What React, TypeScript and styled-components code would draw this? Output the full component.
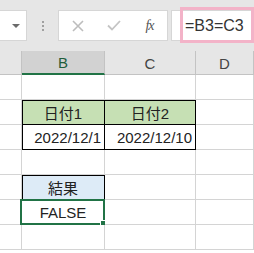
import React from "react";
import styled, { createGlobalStyle, css } from "styled-components";

const GlobalStyle = createGlobalStyle`
  html, body {
    margin: 0;
    padding: 0;
    background: #ffffff;
    font-family: "Liberation Sans", "Noto Sans CJK JP", sans-serif;
    overflow: hidden;
  }
`;

const GREEN = "#217346";

const Sheet = styled.div`
  width: 254px;
  height: 253px;
  overflow: hidden;
  background: #ffffff;
`;

const Toolbar = styled.div`
  height: 51px;
  box-sizing: border-box;
  padding-top: 10px;
  background: #e6e6e6;
  display: flex;
  align-items: flex-start;
`;

const NameBox = styled.div`
  width: 27px;
  height: 31px;
  box-sizing: border-box;
  background: #ffffff;
  border: 1px solid #d6d6d6;
  border-left: none;
  display: flex;
  align-items: center;
  justify-content: flex-end;
  padding-right: 6px;
`;

const Caret = styled.div`
  width: 0;
  height: 0;
  border-left: 4px solid transparent;
  border-right: 4px solid transparent;
  border-top: 4px solid #6b6b6b;
`;

const Grip = styled.div`
  width: 31px;
  height: 31px;
  display: flex;
  flex-direction: column;
  align-items: center;
  justify-content: center;
  gap: 2px;
`;

const Dot = styled.span`
  width: 2px;
  height: 2px;
  background: #a0a0a0;
`;

const ButtonBox = styled.div`
  width: 110px;
  height: 31px;
  box-sizing: border-box;
  background: #ffffff;
  border: 1px solid #d6d6d6;
  display: grid;
  grid-template-columns: 37px 36px 1fr;
  align-items: center;
  justify-items: center;
`;

const FxLabel = styled.span`
  font-family: "Liberation Serif", serif;
  font-style: italic;
  font-size: 14px;
  color: #555555;
  letter-spacing: -1px;
`;

const FormulaBox = styled.div`
  position: relative;
  flex: 1;
  margin-left: 3px;
  height: 31px;
  box-sizing: border-box;
  background: #ffffff;
  border: 1px solid #d6d6d6;
  border-right: none;
  display: flex;
  align-items: center;
  padding-left: 13px;
  font-size: 16px;
  color: #333333;
`;

const Highlight = styled.div`
  position: absolute;
  left: 8px;
  top: -4px;
  width: 74px;
  height: 36px;
  box-sizing: border-box;
  border: 3px solid #f3b3c8;
`;

const Grid = styled.div`
  display: grid;
  grid-template-columns: 22px 83px 91px 1fr;
  grid-auto-rows: 25px;
  grid-template-rows: 24px;
`;

const Head = styled.div<{ $selected?: boolean }>`
  box-sizing: border-box;
  background: ${(p) => (p.$selected ? "#d2d2d2" : "#e6e6e6")};
  border-right: 1px solid #c3c3c3;
  border-bottom: ${(p) => (p.$selected ? `2px solid ${GREEN}` : "1px solid #c3c3c3")};
  display: flex;
  align-items: center;
  justify-content: center;
  font-size: 15px;
  color: ${(p) => (p.$selected ? "#1f5e3c" : "#444444")};
  padding-top: 1px;
`;

type Fill = "green" | "blue" | undefined;

const Cell = styled.div<{
  $fill?: Fill;
  $box?: boolean;
  $top?: boolean;
  $left?: boolean;
  $align?: "center" | "right";
}>`
  position: relative;
  box-sizing: border-box;
  border-right: 1px solid #d4d4d4;
  border-bottom: 1px solid #d4d4d4;
  background: ${(p) =>
    p.$fill === "green" ? "#c6e0b4" : p.$fill === "blue" ? "#ddebf7" : "#ffffff"};
  display: flex;
  align-items: center;
  justify-content: ${(p) => (p.$align === "right" ? "flex-end" : "center")};
  padding: 0 3px;
  font-size: 15px;
  color: #222222;
  white-space: nowrap;
  ${(p) =>
    p.$box &&
    css`
      border-right-color: #000000;
      border-bottom-color: #000000;
    `}
  box-shadow: ${(p) =>
    [p.$left ? "inset 1px 0 #000" : "", p.$top ? "inset 0 1px #000" : ""]
      .filter(Boolean)
      .join(", ") || "none"};
`;

const Selection = styled.div`
  position: absolute;
  left: -2px;
  top: -1px;
  right: -1px;
  bottom: -1px;
  border: 2px solid ${GREEN};
  pointer-events: none;
`;

const Handle = styled.div`
  position: absolute;
  right: -4px;
  bottom: -4px;
  width: 5px;
  height: 5px;
  background: ${GREEN};
  border: 1px solid #ffffff;
`;

const CrossIcon = () => (
  <svg width="12" height="12" viewBox="0 0 12 12">
    <path d="M1 1 L11 11 M11 1 L1 11" stroke="#bdbdbd" strokeWidth="1.6" fill="none" />
  </svg>
);

const CheckIcon = () => (
  <svg width="14" height="11" viewBox="0 0 14 11">
    <path d="M1 5.5 L5 9.5 L13 1" stroke="#c4c4c4" strokeWidth="1.8" fill="none" />
  </svg>
);

type Row = {
  b?: React.ReactNode;
  c?: React.ReactNode;
  fill?: Fill;
  box?: boolean;
  top?: boolean;
  align?: "center" | "right";
  cBox?: boolean;
  selected?: boolean;
};

const rows: Row[] = [
  {},
  { b: "日付1", c: "日付2", fill: "green", box: true, cBox: true, top: true },
  { b: "2022/12/1", c: "2022/12/10", box: true, cBox: true, align: "right" },
  {},
  { b: "結果", fill: "blue", box: true, top: true },
  { b: "FALSE", selected: true },
  {},
];

export default function App() {
  return (
    <Sheet>
      <GlobalStyle />
      <Toolbar>
        <NameBox>
          <Caret />
        </NameBox>
        <Grip>
          <Dot />
          <Dot />
          <Dot />
        </Grip>
        <ButtonBox>
          <CrossIcon />
          <CheckIcon />
          <FxLabel>fx</FxLabel>
        </ButtonBox>
        <FormulaBox>
          =B3=C3
          <Highlight />
        </FormulaBox>
      </Toolbar>
      <Grid>
        <Head />
        <Head $selected>B</Head>
        <Head>C</Head>
        <Head>D</Head>
        {rows.map((r, i) => (
          <React.Fragment key={i}>
            <Cell />
            <Cell
              $fill={r.fill}
              $box={r.box}
              $top={r.top}
              $left={r.box}
              $align={r.align}
            >
              {r.b}
              {r.selected && (
                <Selection>
                  <Handle />
                </Selection>
              )}
            </Cell>
            <Cell
              $fill={r.cBox ? r.fill : undefined}
              $box={r.cBox}
              $top={r.cBox && r.top}
              $align={r.align}
            >
              {r.c}
            </Cell>
            <Cell />
          </React.Fragment>
        ))}
      </Grid>
    </Sheet>
  );
}
